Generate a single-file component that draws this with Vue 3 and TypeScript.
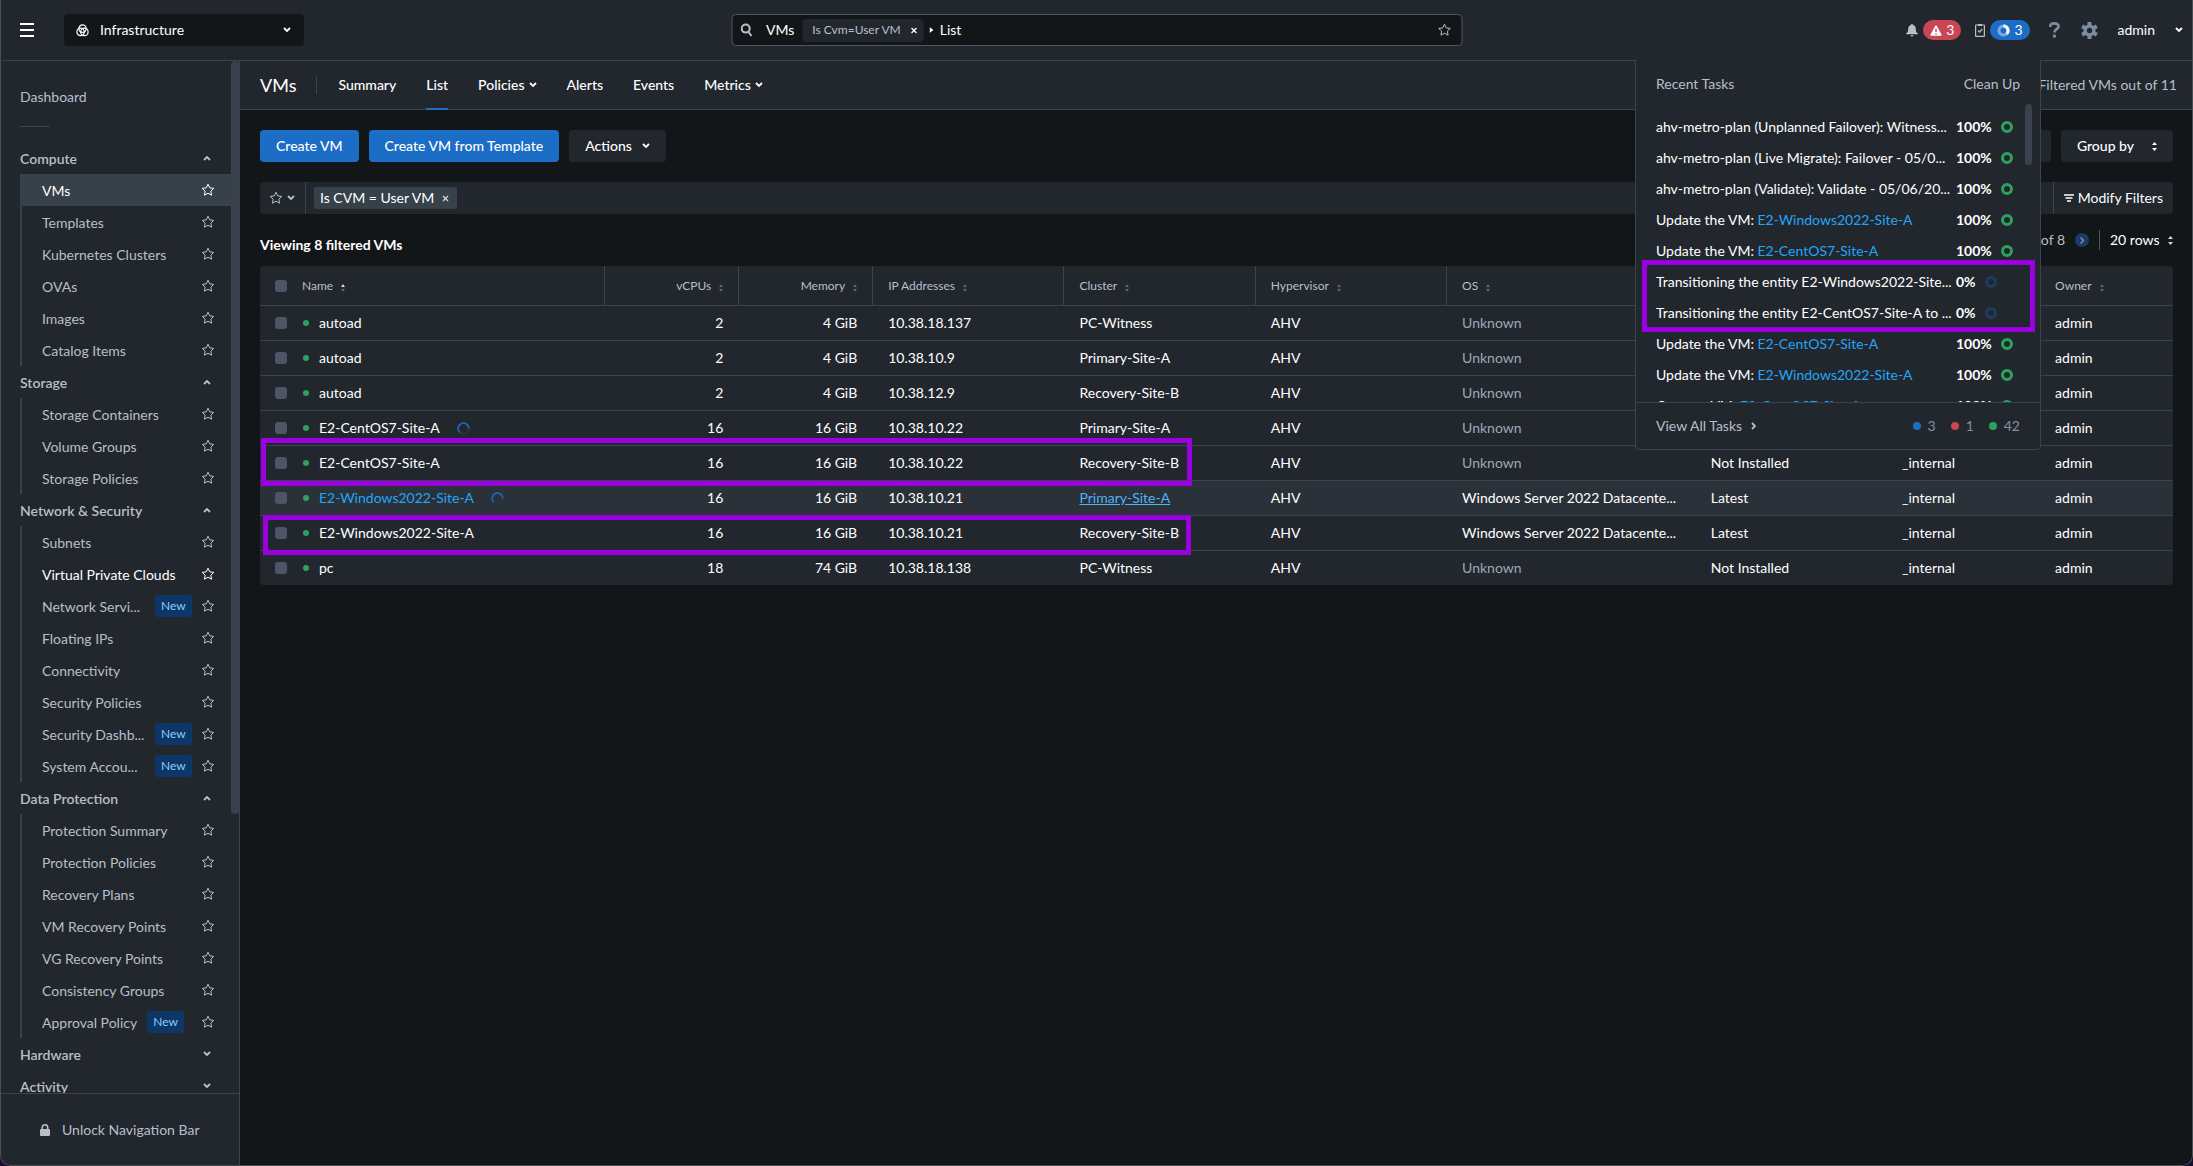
<script setup lang="ts">
import { ref } from 'vue'

interface NavItem {
  label: string
  badge?: boolean
  active?: boolean
  bright?: boolean
}
interface NavSection {
  title: string
  open: boolean
  items: NavItem[]
}
interface Vm {
  name: string
  cpus: number
  memory: string
  ip: string
  cluster: string
  os: string
  tools: string
  project: string
  busy?: boolean
  hover?: boolean
}
interface Task {
  text: string
  entity?: string
  percent: number
}

const STAR = 'M7 1.2l1.75 3.7 4.05.5-2.98 2.8.78 4L7 10.2l-3.6 2 .78-4L1.2 5.4l4.05-.5z'

const sections: NavSection[] = [
  {
    title: 'Compute',
    open: true,
    items: [
      { label: 'VMs', active: true },
      { label: 'Templates' },
      { label: 'Kubernetes Clusters' },
      { label: 'OVAs' },
      { label: 'Images' },
      { label: 'Catalog Items' },
    ],
  },
  {
    title: 'Storage',
    open: true,
    items: [{ label: 'Storage Containers' }, { label: 'Volume Groups' }, { label: 'Storage Policies' }],
  },
  {
    title: 'Network & Security',
    open: true,
    items: [
      { label: 'Subnets' },
      { label: 'Virtual Private Clouds', bright: true },
      { label: 'Network Servi...', badge: true },
      { label: 'Floating IPs' },
      { label: 'Connectivity' },
      { label: 'Security Policies' },
      { label: 'Security Dashb...', badge: true },
      { label: 'System Accou...', badge: true },
    ],
  },
  {
    title: 'Data Protection',
    open: true,
    items: [
      { label: 'Protection Summary' },
      { label: 'Protection Policies' },
      { label: 'Recovery Plans' },
      { label: 'VM Recovery Points' },
      { label: 'VG Recovery Points' },
      { label: 'Consistency Groups' },
      { label: 'Approval Policy', badge: true },
    ],
  },
  { title: 'Hardware', open: false, items: [] },
  { title: 'Activity', open: false, items: [] },
]

const tabs = [
  { label: 'Summary' },
  { label: 'List', active: true },
  { label: 'Policies', menu: true },
  { label: 'Alerts' },
  { label: 'Events' },
  { label: 'Metrics', menu: true },
]

const vms: Vm[] = [
  { name: 'autoad', cpus: 2, memory: '4 GiB', ip: '10.38.18.137', cluster: 'PC-Witness', os: 'Unknown', tools: '', project: '' },
  { name: 'autoad', cpus: 2, memory: '4 GiB', ip: '10.38.10.9', cluster: 'Primary-Site-A', os: 'Unknown', tools: '', project: '' },
  { name: 'autoad', cpus: 2, memory: '4 GiB', ip: '10.38.12.9', cluster: 'Recovery-Site-B', os: 'Unknown', tools: '', project: '' },
  { name: 'E2-CentOS7-Site-A', cpus: 16, memory: '16 GiB', ip: '10.38.10.22', cluster: 'Primary-Site-A', os: 'Unknown', tools: '', project: '', busy: true },
  { name: 'E2-CentOS7-Site-A', cpus: 16, memory: '16 GiB', ip: '10.38.10.22', cluster: 'Recovery-Site-B', os: 'Unknown', tools: 'Not Installed', project: '_internal' },
  { name: 'E2-Windows2022-Site-A', cpus: 16, memory: '16 GiB', ip: '10.38.10.21', cluster: 'Primary-Site-A', os: 'Windows Server 2022 Datacente...', tools: 'Latest', project: '_internal', busy: true, hover: true },
  { name: 'E2-Windows2022-Site-A', cpus: 16, memory: '16 GiB', ip: '10.38.10.21', cluster: 'Recovery-Site-B', os: 'Windows Server 2022 Datacente...', tools: 'Latest', project: '_internal' },
  { name: 'pc', cpus: 18, memory: '74 GiB', ip: '10.38.18.138', cluster: 'PC-Witness', os: 'Unknown', tools: 'Not Installed', project: '_internal' },
]

const columns = [
  { label: 'vCPUs', right: true },
  { label: 'Memory', right: true },
  { label: 'IP Addresses' },
  { label: 'Cluster' },
  { label: 'Hypervisor' },
  { label: 'OS' },
  { label: '' },
  { label: '' },
  { label: 'Owner' },
]

const tasks: Task[] = [
  { text: 'ahv-metro-plan (Unplanned Failover): Witness...', percent: 100 },
  { text: 'ahv-metro-plan (Live Migrate): Failover - 05/0...', percent: 100 },
  { text: 'ahv-metro-plan (Validate): Validate - 05/06/20...', percent: 100 },
  { text: 'Update the VM:', entity: 'E2-Windows2022-Site-A', percent: 100 },
  { text: 'Update the VM:', entity: 'E2-CentOS7-Site-A', percent: 100 },
  { text: 'Transitioning the entity E2-Windows2022-Site...', percent: 0 },
  { text: 'Transitioning the entity E2-CentOS7-Site-A to ...', percent: 0 },
  { text: 'Update the VM:', entity: 'E2-CentOS7-Site-A', percent: 100 },
  { text: 'Update the VM:', entity: 'E2-Windows2022-Site-A', percent: 100 },
  { text: 'Create a VM:', entity: 'E2-CentOS7-Site-A', percent: 100 },
]

const query = ref('List')
const filterText = ref('')
</script>

<template>
  <div class="app">
    <header class="topbar">
      <button class="plain burger" aria-label="Menu"><i></i><i></i><i></i></button>
      <label class="switcher">
        <svg width="13" height="13" viewBox="0 0 13 13" fill="none" stroke="#fff" stroke-width="1.2">
          <circle cx="6.5" cy="4.6" r="3.7" />
          <circle cx="4.6" cy="7.9" r="3.7" />
          <circle cx="8.4" cy="7.9" r="3.7" />
        </svg>
        <select aria-label="Application">
          <option>Infrastructure</option>
        </select>
        <svg class="chev" width="8" height="6" viewBox="0 0 8 6"><path d="M1 1l3 3 3-3" /></svg>
      </label>

      <div class="search">
        <svg class="lens" width="12" height="14" viewBox="0 0 12 14" fill="none" stroke="#b8bfca" stroke-width="2">
          <circle cx="5.2" cy="5.6" r="4" /><path d="M8 9l3 4" />
        </svg>
        <span class="scope">VMs</span>
        <span class="scope-chip">Is Cvm=User VM
          <button class="plain" aria-label="Remove scope">
            <svg width="7" height="7" viewBox="0 0 7 7" stroke="#fff" stroke-width="1.3"><path d="M1 1l5 5M6 1l-5 5" /></svg>
          </button>
        </span>
        <svg class="tri" width="4" height="6" viewBox="0 0 4 6"><path d="M0 0l4 3-4 3z" fill="#fff" /></svg>
        <input v-model="query" aria-label="Search" />
        <svg width="14" height="14" viewBox="0 0 14 14" class="star"><path :d="STAR" /></svg>
      </div>

      <div class="tools">
        <button class="plain alerts" aria-label="Alerts">
          <svg width="12" height="13" viewBox="0 0 12 13" fill="#b8bfca">
            <path d="M6 0c.7 0 1 .5 1 1 1.9.5 2.8 2 2.8 4 0 2.4.6 3.5 2.2 4.5v.8H0v-.8C1.6 8.5 2.2 7.4 2.2 5c0-2 .9-3.5 2.800-4 0-.5.3-1 1-1zM4.600 11.300h2.800a1.400 1.400 0 0 1-2.800 0z" />
          </svg>
          <span class="pill red">
            <svg width="12" height="11" viewBox="0 0 12 11"><path d="M6 1l5 9H1z" fill="#fff" stroke="#fff" stroke-width="1.4" stroke-linejoin="round" /><path d="M6 3.5v3.5M6 8.2v1.3" stroke="#c84655" stroke-width="1.4" /></svg>
            3
          </span>
        </button>
        <button class="plain jobs" aria-label="Tasks">
          <svg width="10" height="13" viewBox="0 0 10 13" fill="none" stroke="#b8bfca">
            <rect x=".6" y="1" width="8.8" height="11.4" rx=".5" stroke-width="1.2" /><path d="M3 1h4" stroke-width="2" /><path d="M3 6.5l1.6 1.7L7.3 5" stroke-width="1.2" />
          </svg>
          <span class="pill blue">
            <svg width="13" height="13" viewBox="0 0 13 13" fill="none" stroke-width="3">
              <circle cx="6.5" cy="6.5" r="4.5" stroke="#7eaae0" /><path d="M6.5 2a4.5 4.5 0 0 1 3.2 7.7" stroke="#fff" />
            </svg>
            3
          </span>
        </button>
        <button class="plain help" aria-label="Help">
          <svg width="11" height="16" viewBox="0 0 11 16" fill="none" stroke="#7b8da2" stroke-width="2.6">
            <path d="M1.3 5V3.7C1.3 2 3 1.4 5.4 1.4s4.2.9 4.2 3c0 2.9-4.2 2.7-4.2 6.1" /><path d="M5.4 12.6v3" stroke-width="3" />
          </svg>
        </button>
        <button class="plain gear" aria-label="Settings">
          <svg width="17" height="17" viewBox="0 0 16 16">
            <g stroke="#7b8da2" stroke-width="3.8"><path d="M8 0v16M1.1 4l13.8 8M14.9 4L1.1 12" /></g>
            <circle cx="8" cy="8" r="5.6" fill="#7b8da2" /><circle cx="8" cy="8" r="2.5" fill="#22272e" />
          </svg>
        </button>
        <button class="plain user">admin<svg class="chev" width="8" height="6" viewBox="0 0 8 6"><path d="M1 1l3 3 3-3" /></svg></button>
      </div>
    </header>

    <div class="body">
      <aside class="side">
        <div class="side-scroll">
          <nav class="nav">
            <a href="#" class="dash">Dashboard</a>
            <hr />
            <section v-for="s in sections" :key="s.title">
              <button class="plain sec">
                <span>{{ s.title }}</span>
                <svg class="chev" width="8" height="6" viewBox="0 0 8 6"><path :d="s.open ? 'M1 5l3-3 3 3' : 'M1 1l3 3 3-3'" /></svg>
              </button>
              <ul v-if="s.open">
                <li v-for="i in s.items" :key="i.label" :class="{ active: i.active, bright: i.bright }">
                  <a href="#" :class="{ cut: i.label.endsWith('...') }">{{ i.label }}</a>
                  <span v-if="i.badge" class="new">New</span>
                  <svg width="14" height="14" viewBox="0 0 14 14" class="star"><path :d="STAR" /></svg>
                </li>
              </ul>
            </section>
          </nav>
          <div class="track"><div class="thumb"></div></div>
        </div>
        <button class="plain unlock">
          <svg width="10" height="12" viewBox="0 0 10 12"><rect y="5" width="10" height="7" rx="1" fill="#b8bfca" /><path d="M2.3 6V3.5a2.7 2.7 0 0 1 5.4 0V6" fill="none" stroke="#b8bfca" stroke-width="1.6" /></svg>
          Unlock Navigation Bar
        </button>
      </aside>

      <main class="main">
        <div class="tabbar">
          <h1>VMs</h1>
          <nav class="tabs">
            <a v-for="t in tabs" :key="t.label" href="#" :class="{ on: t.active }">{{ t.label }}<svg v-if="t.menu" class="chev" width="8" height="6" viewBox="0 0 8 6"><path d="M1 1l3 3 3-3" /></svg></a>
          </nav>
          <span class="count">Filtered VMs out of 11</span>
        </div>

        <div class="content">
          <div class="actions">
            <button class="btn primary">Create VM</button>
            <button class="btn primary">Create VM from Template</button>
            <button class="btn">Actions<svg class="chev" width="8" height="6" viewBox="0 0 8 6"><path d="M1 1l3 3 3-3" /></svg></button>
            <span class="grow"></span>
            <button class="btn view" aria-label="View"></button>
            <button class="btn group">Group by<svg width="5" height="9" viewBox="0 0 5 9" fill="#fff"><path d="M0 3l2.5-3L5 3zM0 6h5L2.5 9z" /></svg></button>
          </div>

          <div class="filters">
            <button class="plain saved" aria-label="Saved filters">
              <svg width="14" height="14" viewBox="0 0 14 14" class="star"><path :d="STAR" /></svg>
              <svg class="chev" width="8" height="6" viewBox="0 0 8 6"><path d="M1 1l3 3 3-3" /></svg>
            </button>
            <span class="chip">Is CVM = User VM
              <button class="plain" aria-label="Remove filter">
                <svg width="7" height="7" viewBox="0 0 7 7" stroke="#d3d7de" stroke-width="1.3"><path d="M1 1l5 5M6 1l-5 5" /></svg>
              </button>
            </span>
            <input v-model="filterText" aria-label="Filter" />
            <button class="plain modify">
              <svg width="10" height="9" viewBox="0 0 10 9" stroke="#fff" stroke-width="1.3"><path d="M0 1h10M1.5 4h7M3 7h4" /></svg>
              Modify Filters
            </button>
          </div>

          <div class="summary">
            <strong>Viewing 8 filtered VMs</strong>
            <div class="pager">
              <span>of 8</span>
              <button class="plain next" aria-label="Next page">
                <svg width="4" height="7" viewBox="0 0 4 7" fill="none" stroke="#8b97a8" stroke-width="1.3"><path d="M.5.5l3 3-3 3" /></svg>
              </button>
              <label class="rows">
                <select aria-label="Rows per page"><option>20 rows</option></select>
                <svg width="5" height="9" viewBox="0 0 5 9" fill="#d3d7de"><path d="M0 3l2.5-3L5 3zM0 6h5L2.5 9z" /></svg>
              </label>
            </div>
          </div>

          <div class="table-wrap">
            <table>
              <colgroup>
                <col class="c-check" /><col /><col class="w7" /><col class="w7" /><col class="w10" /><col class="w10" />
                <col class="w10" /><col class="w13" /><col class="w10" /><col class="w8" /><col class="w7" />
              </colgroup>
              <thead>
                <tr>
                  <th class="check"><input type="checkbox" aria-label="Select all" /></th>
                  <th class="name">Name<svg class="sort asc" width="4" height="8" viewBox="0 0 4 8"><path d="M0 3l2-3 2 3z" /><path d="M0 5h4L2 8z" /></svg></th>
                  <th v-for="(c, n) in columns" :key="n" :class="{ right: c.right }">
                    {{ c.label }}<svg v-if="c.label" class="sort" width="4" height="8" viewBox="0 0 4 8"><path d="M0 3l2-3 2 3z" /><path d="M0 5h4L2 8z" /></svg>
                  </th>
                </tr>
              </thead>
              <tbody>
                <tr v-for="(v, n) in vms" :key="n" :class="{ hover: v.hover }">
                  <td class="check"><input type="checkbox" :aria-label="'Select ' + v.name" /></td>
                  <td class="name">
                    <div class="vm">
                      <i class="dot green"></i><a href="#">{{ v.name }}</a>
                      <svg v-if="v.busy" width="13" height="13" viewBox="0 0 13 13" fill="none" stroke-width="1.6">
                        <circle cx="6.5" cy="6.5" r="5.4" stroke="#23364f" />
                        <path d="M2.7 10.300A5.400 5.400 0 1 1 11.900 6.500" stroke="#2268b8" />
                      </svg>
                    </div>
                  </td>
                  <td class="right">{{ v.cpus }}</td>
                  <td class="right">{{ v.memory }}</td>
                  <td>{{ v.ip }}</td>
                  <td><a href="#" class="cluster">{{ v.cluster }}</a></td>
                  <td>AHV</td>
                  <td :class="{ dim: v.os === 'Unknown' }">{{ v.os }}</td>
                  <td>{{ v.tools }}</td>
                  <td>{{ v.project }}</td>
                  <td>admin</td>
                </tr>
              </tbody>
            </table>
            <div class="mark mark-a"></div>
            <div class="mark mark-b"></div>
          </div>
        </div>
      </main>

      <section class="panel">
        <div class="panel-head"><span>Recent Tasks</span><a href="#">Clean Up</a></div>
        <div class="panel-list">
          <ul>
            <li v-for="(t, n) in tasks" :key="n">
              <span class="what">{{ t.text }} <a v-if="t.entity" href="#">{{ t.entity }}</a></span>
              <b>{{ t.percent }}%</b>
              <i class="ring" :class="{ idle: t.percent === 0 }"></i>
            </li>
          </ul>
          <div class="panel-thumb"></div>
        </div>
        <div class="panel-foot">
          <a href="#">View All Tasks<svg width="5" height="8" viewBox="0 0 5 8" fill="none" stroke="#b8bfca" stroke-width="1.8"><path d="M1 1l3 3-3 3" /></svg></a>
          <span class="tally"><i class="dot blue"></i>3</span>
          <span class="tally"><i class="dot red"></i>1</span>
          <span class="tally"><i class="dot green"></i>42</span>
        </div>
        <div class="mark mark-c"></div>
      </section>
    </div>
  </div>
</template>

<style>
html,
body {
  margin: 0;
  background: #1b0b2b;
}
</style>

<style scoped>
* {
  box-sizing: border-box;
}
.app {
  position: relative;
  display: flex;
  flex-direction: column;
  height: 100vh;
  overflow: hidden;
  border-radius: 0 0 10px 10px;
  background: #131619;
  color: #fff;
  font-family: Lato, 'Liberation Sans', sans-serif;
  font-size: 14px;
  line-height: 20px;
}
.app::after {
  content: '';
  position: absolute;
  inset: 0;
  border: 1px solid #4a4f56;
  border-top: none;
  border-radius: 0 0 10px 10px;
  pointer-events: none;
  z-index: 5;
}
a {
  color: inherit;
  text-decoration: none;
}
ul {
  list-style: none;
  margin: 0;
  padding: 0;
}
button,
input,
select {
  font: inherit;
  color: inherit;
}
.plain {
  display: flex;
  align-items: center;
  padding: 0;
  border: none;
  background: none;
  cursor: pointer;
}
svg {
  flex: none;
}
.chev {
  fill: none;
  stroke: currentColor;
  stroke-width: 1.8;
}
.star {
  fill: none;
  stroke: currentColor;
  stroke-width: 1;
}

/* top bar */
.topbar {
  flex: none;
  position: relative;
  display: flex;
  align-items: center;
  justify-content: space-between;
  height: 61px;
  padding: 0 10px 0 20px;
  border-bottom: 1px solid #3a444e;
  background: #22272e;
}
.burger {
  flex-direction: column;
  gap: 4px;
}
.burger i {
  width: 14px;
  height: 2px;
  background: #fff;
}
.switcher {
  display: flex;
  align-items: center;
  width: 240px;
  height: 32px;
  margin: 0 auto 0 30px;
  padding: 0 13px 0 12px;
  border-radius: 4px;
  background: #131619;
}
.switcher select {
  flex: 1;
  margin: 0 0 0 11px;
  padding: 0;
  border: none;
  background: none;
  appearance: none;
}
.search {
  position: absolute;
  left: 50%;
  transform: translateX(-50%);
  display: flex;
  align-items: center;
  width: 731px;
  height: 32px;
  padding: 0 10px 0 8px;
  border: 1px solid #4c5666;
  border-radius: 4px;
  background: #131619;
}
.search .scope {
  margin: 0 8px 0 14px;
}
.scope-chip {
  display: flex;
  align-items: center;
  gap: 10px;
  height: 23px;
  padding: 0 6px 0 10px;
  border-radius: 4px;
  background: #22272e;
  color: #b8bfca;
  font-size: 12px;
}
.search .tri {
  margin: 0 6px;
}
.search input,
.filters input {
  flex: 1;
  min-width: 0;
  padding: 0;
  border: none;
  outline: none;
  background: none;
}
.search .star {
  color: #b8bfca;
}
.tools {
  display: flex;
  align-items: center;
}
.alerts {
  gap: 5px;
  margin-right: 14px;
}
.jobs {
  gap: 5px;
  margin-right: 19px;
}
.pill {
  display: flex;
  align-items: center;
  gap: 4px;
  height: 20px;
  padding: 0 7px;
  border-radius: 10px;
}
.pill.red {
  background: #c84655;
}
.pill.blue {
  background: #1b6dc6;
}
.help {
  margin-right: 21px;
}
.gear {
  margin-right: 20px;
}
.user {
  gap: 20px;
}

/* side bar */
.body {
  position: relative;
  flex: 1;
  display: flex;
  min-height: 0;
}
.side {
  flex: none;
  display: flex;
  flex-direction: column;
  width: 240px;
  border-right: 1px solid #3a444e;
  background: #22272e;
  color: #b8bfca;
}
.side-scroll {
  flex: 1;
  display: flex;
  min-height: 0;
  overflow: hidden;
}
.nav {
  flex: 1;
  padding: 20px 0 0 20px;
}
.dash {
  display: block;
  line-height: 32px;
}
.nav hr {
  width: 30px;
  height: 1px;
  margin: 13px 0 15px;
  border: none;
  background: #3a444e;
}
.sec {
  justify-content: space-between;
  width: 100%;
  height: 32px;
  padding-right: 20px;
  font-weight: 600;
}
.nav ul {
  border-left: 2px solid #36414b;
}
.nav li {
  display: flex;
  align-items: center;
  height: 32px;
  padding: 0 16px 0 20px;
}
.nav li.active {
  background: #36414a;
  color: #fff;
}
.nav li.bright {
  color: #fff;
}
.nav li .star {
  margin-left: auto;
}
.nav li a,
.sec span {
  padding-top: 2px;
  white-space: nowrap;
}
.nav li a.cut {
  width: 103px;
}
.new {
  margin-left: 10px;
  padding: 0 6px;
  border-radius: 3px;
  background: #0d3766;
  color: #8fcbfb;
  font-size: 12px;
  line-height: 22px;
}
.track {
  width: 8px;
}
.thumb {
  height: 73%;
  border-radius: 4px;
  background: #3b424d;
}
.unlock {
  flex: none;
  gap: 12px;
  height: 73px;
  padding-left: 40px;
  border-top: 1px solid #3a444e;
  color: #b8bfca;
}

/* tab bar */
.main {
  flex: 1;
  min-width: 0;
}
.tabbar {
  display: flex;
  align-items: center;
  height: 49px;
  padding: 0 16px 0 20px;
  border-bottom: 1px solid #3a444e;
  background: #22272e;
}
.tabbar h1 {
  margin: 0 20px 0 0;
  font-size: 18px;
  font-weight: 400;
}
.tabs {
  display: flex;
  gap: 30px;
  align-items: center;
  padding-left: 21px;
  border-left: 1px solid #3a444e;
  height: 18px;
  font-weight: 500;
}
.tabs a {
  display: flex;
  align-items: center;
  gap: 4px;
  height: 49px;
  padding-top: 2px;
  border-bottom: 2px solid transparent;
}
.tabs .on {
  border-color: #1b6dc6;
}
.count {
  margin-left: auto;
  color: #b8bfca;
}

/* content */
.content {
  padding: 20px;
}
.actions {
  display: flex;
  gap: 10px;
}
.grow {
  flex: 1;
}
.btn {
  display: flex;
  align-items: center;
  gap: 10px;
  height: 32px;
  padding: 0 16px;
  border: none;
  border-radius: 4px;
  background: #22272e;
  font-weight: 500;
}
.btn.primary {
  background: #1b6dc6;
}
.btn.view {
  width: 120px;
}
.btn.group {
  gap: 18px;
}
.filters {
  display: flex;
  align-items: center;
  height: 32px;
  margin-top: 20px;
  border-radius: 4px;
  background: #22272e;
}
.saved {
  gap: 4px;
  height: 32px;
  padding: 0 10px 0 9px;
  border-right: 1px solid #3a444e;
  color: #b8bfca;
}
.chip {
  display: flex;
  align-items: center;
  gap: 8px;
  height: 22px;
  margin-left: 8px;
  padding: 0 8px 0 6px;
  border-radius: 2px;
  background: #36414a;
}
.modify {
  gap: 4px;
  height: 32px;
  padding: 0 10px;
  border-left: 1px solid #3a444e;
}
.summary {
  display: flex;
  align-items: center;
  justify-content: space-between;
  height: 52px;
  padding-top: 10px;
}
.summary strong {
  font-weight: 700;
}
.pager {
  display: flex;
  align-items: center;
  height: 16px;
  margin-top: -10px;
  color: #b8bfca;
}
.next {
  justify-content: center;
  width: 14px;
  height: 14px;
  margin: 0 10px;
  border-radius: 7px;
  background: #1b3a68;
}
.rows {
  display: flex;
  align-items: center;
  gap: 8px;
  padding-left: 10px;
  border-left: 1px solid #4c5666;
  color: #fff;
}
.rows select {
  padding: 0;
  border: none;
  background: none;
  appearance: none;
}

/* table */
.table-wrap {
  position: relative;
}
table {
  width: 100%;
  table-layout: fixed;
  border-collapse: separate;
  border-spacing: 0;
  border-radius: 4px;
  overflow: hidden;
  background: #22272e;
}
.c-check {
  width: 42px;
}
.w7 {
  width: 7%;
}
.w8 {
  width: 8%;
}
.w10 {
  width: 10%;
}
.w13 {
  width: 13%;
}
th,
td {
  padding: 0 15px 0 16px;
  border-bottom: 1px solid #3a444e;
  text-align: left;
  white-space: nowrap;
}
th {
  height: 40px;
  padding-left: 15px;
  border-left: 1px solid #3a444e;
  color: #b8bfca;
  font-size: 12px;
  font-weight: 400;
}
td {
  height: 35px;
}
tr:last-child td {
  height: 34px;
  border-bottom: none;
}
th.check,
td.check {
  padding: 0 0 0 15px;
  border-left: none;
}
th.name,
td.name {
  padding-left: 0;
  border-left: none;
}
th.right,
td.right {
  text-align: right;
}
td.dim {
  color: #9fa7b4;
}
tr.hover td {
  background: #2b3138;
}
tr.hover .vm a {
  color: #22a5f7;
}
tr.hover .cluster {
  color: #4fb3f6;
  text-decoration: underline;
}
.check input {
  display: block;
  width: 12px;
  height: 12px;
  margin: 0;
  border-radius: 3px;
  background: #4c5666;
  appearance: none;
}
.sort {
  margin-left: 8px;
  fill: #5a6472;
  vertical-align: -2px;
}
.sort.asc path:first-child {
  fill: #d3d7de;
}
.vm {
  display: flex;
  align-items: center;
  padding-left: 1px;
}
.vm .dot {
  margin-right: 10px;
}
.vm svg {
  margin-left: 17px;
}
.dot {
  width: 6px;
  height: 6px;
  border-radius: 50%;
}
.dot.green {
  background: #2ca25f;
}
.dot.red {
  background: #c84655;
}
.dot.blue {
  background: #1b6dc6;
}

/* callout frames drawn over the page */
.mark {
  position: absolute;
  border: 5px solid #9a00e0;
  pointer-events: none;
}
.mark-a {
  left: 1px;
  top: 172px;
  width: 931px;
  height: 48px;
}
.mark-b {
  left: 3px;
  top: 249px;
  width: 928px;
  height: 40px;
}
.mark-c {
  left: 6px;
  top: 200px;
  width: 393px;
  height: 72px;
}

/* recent tasks */
.panel {
  position: absolute;
  top: -1px;
  right: 152px;
  width: 406px;
  border: 1px solid #3a444e;
  border-top: none;
  border-radius: 0 0 4px 4px;
  background: #22272e;
}
.panel-head {
  display: flex;
  justify-content: space-between;
  padding: 14px 20px 10px;
  color: #b8bfca;
}
.panel-list {
  display: flex;
  height: 298px;
  overflow: hidden;
}
.panel-list ul {
  flex: 1;
  padding: 7px 0 0 20px;
}
.panel-list li {
  display: flex;
  align-items: center;
  height: 31px;
}
.what {
  flex: none;
  width: 300px;
  overflow: hidden;
  white-space: nowrap;
}
.what a {
  color: #22a5f7;
}
.ring {
  width: 12px;
  height: 12px;
  margin-left: 9px;
  border: 3px solid #2ca25f;
  border-radius: 50%;
}
.ring.idle {
  border-color: #1f3a63;
}
.panel-thumb {
  width: 7px;
  height: 61px;
  margin-right: 8px;
  border-radius: 4px;
  background: #3b424d;
}
.panel-foot {
  display: flex;
  align-items: center;
  gap: 15px;
  height: 47px;
  padding: 0 20px;
  border-top: 1px solid #3a444e;
  color: #b8bfca;
}
.panel-foot a {
  display: flex;
  align-items: center;
  gap: 9px;
  margin-right: auto;
}
.tally {
  display: flex;
  align-items: center;
  gap: 7px;
  color: #8390a3;
}
.tally .dot {
  width: 8px;
  height: 8px;
}
</style>
